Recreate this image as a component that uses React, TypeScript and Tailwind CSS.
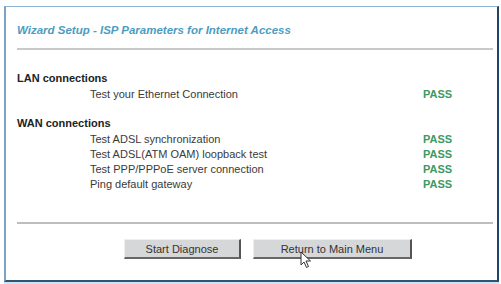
import React from 'react';

const font = { fontFamily: '"Liberation Sans", Arial, sans-serif' };

const lanTests = [{ label: 'Test your Ethernet Connection', result: 'PASS' }];

const wanTests = [
  { label: 'Test ADSL synchronization', result: 'PASS' },
  { label: 'Test ADSL(ATM OAM) loopback test', result: 'PASS' },
  { label: 'Test PPP/PPPoE server connection', result: 'PASS' },
  { label: 'Ping default gateway', result: 'PASS' },
];

const TestRow: React.FC<{ label: string; result: string }> = ({ label, result }) => (
  <div className="flex h-[15px] items-center text-[11px] text-[#3a3a3a]">
    <span className="w-[406px] pl-[73px]">{label}</span>
    <span className="font-bold text-[#3c9a62]">{result}</span>
  </div>
);

const Button: React.FC<{ children: React.ReactNode; width: string }> = ({ children, width }) => (
  <div
    className={`${width} flex h-[20px] items-center justify-center border border-t-[#eeeeee] border-l-[#eeeeee] border-r-2 border-b-2 border-r-[#555] border-b-[#666] bg-[#d6d7d9] text-[11px] text-[#333]`}
  >
    {children}
  </div>
);

const Cursor: React.FC = () => (
  <svg className="absolute left-[300px] top-[251px]" width="12" height="18" viewBox="0 0 12 18">
    <path d="M1 1 L1 14 L4 11 L6.5 16.5 L8.5 15.5 L6 10 L10.5 10 Z" fill="#fff" stroke="#333" strokeWidth="1" />
  </svg>
);

export default function App() {
  return (
    <div className="relative h-[284px] w-[501px] bg-white" style={font}>
      <div className="pl-[4px] pt-[6px]">
        <div className="h-[276px] w-[495px] border-l-2 border-t border-b-2 border-r-2 border-l-[#7aa3c6] border-t-[#8fb3d2] border-r-[#1f4466] border-b-[#2f5576] pl-[11px] pr-[4px]">
          <div className="pt-[15px] text-[11.5px] font-bold italic text-[#4b9cc2]">
            Wizard Setup - ISP Parameters for Internet Access
          </div>
          <div className="mt-[9px] h-[2px] bg-[#c9c9c9]" />

          <div className="pt-[21px]">
            <div className="text-[11px] font-bold leading-[15px] text-[#222]">LAN connections</div>
            {lanTests.map((t) => (
              <TestRow key={t.label} {...t} />
            ))}
          </div>

          <div className="pt-[15px]">
            <div className="text-[11px] font-bold leading-[15px] text-[#222]">WAN connections</div>
            {wanTests.map((t) => (
              <TestRow key={t.label} {...t} />
            ))}
          </div>

          <div className="mt-[31px] h-[2px] bg-[#bdbdbd]" />

          <div className="flex gap-[12px] pl-[107px] pt-[15px]">
            <Button width="w-[117px]">Start Diagnose</Button>
            <Button width="w-[159px]">Return to Main Menu</Button>
          </div>
        </div>
        <div className="h-[2px] w-[495px] bg-[#cfe3f2]" />
      </div>
      <Cursor />
    </div>
  );
}
